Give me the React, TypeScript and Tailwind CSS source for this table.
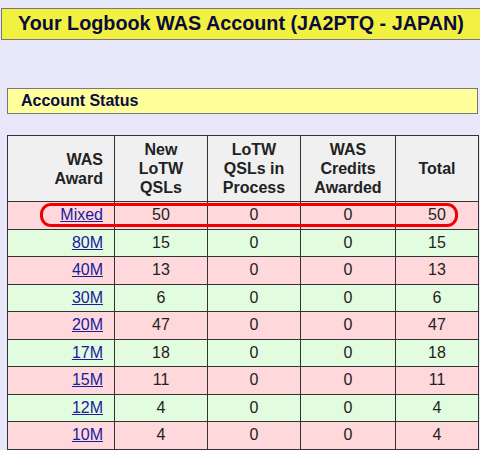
import React from "react";

const rows: [string, number, number, number, number][] = [
  ["Mixed", 50, 0, 0, 50],
  ["80M", 15, 0, 0, 15],
  ["40M", 13, 0, 0, 13],
  ["30M", 6, 0, 0, 6],
  ["20M", 47, 0, 0, 47],
  ["17M", 18, 0, 0, 18],
  ["15M", 11, 0, 0, 11],
  ["12M", 4, 0, 0, 4],
  ["10M", 4, 0, 0, 4],
];

export default function App() {
  return (
    <div
      className="w-[480px] h-[450px] overflow-hidden bg-[#e8e8fa] relative"
      style={{ fontFamily: '"Liberation Sans", Arial, sans-serif' }}
    >
      <div className="pt-[8px] pl-[1px]">
        <div className="h-[32px] bg-[#f2f040] border border-[#777] flex items-center pl-[16px] text-[19.8px] font-bold text-[#0b0b40] w-[480px]">
          Your Logbook WAS Account (JA2PTQ - JAPAN)
        </div>
      </div>
      <div className="mt-[48px] ml-[7px] w-[471px] h-[26px] bg-[#ffff9c] border border-[#777] flex items-center pl-[13px] text-[16px] font-bold text-[#0b0b40]">
        Account Status
      </div>
      <div className="mt-[21px] ml-[7px] relative">
        <table className="border-collapse text-[16px] text-[#222]">
          <colgroup>
            <col className="w-[107px]" />
            <col className="w-[93px]" />
            <col className="w-[93px]" />
            <col className="w-[95px]" />
            <col className="w-[83px]" />
          </colgroup>
          <thead>
            <tr className="h-[66px] bg-[#f0f0f0] font-bold leading-[19px]">
              <th className="border border-[#333] text-right pr-[11px] font-bold">
                WAS
                <br />
                Award
              </th>
              <th className="border border-[#333] text-center font-bold">
                New
                <br />
                LoTW
                <br />
                QSLs
              </th>
              <th className="border border-[#333] text-center font-bold">
                LoTW
                <br />
                QSLs in
                <br />
                Process
              </th>
              <th className="border border-[#333] text-center font-bold">
                WAS
                <br />
                Credits
                <br />
                Awarded
              </th>
              <th className="border border-[#333] text-center font-bold">Total</th>
            </tr>
          </thead>
          <tbody>
            {rows.map((r, i) => (
              <tr
                key={r[0]}
                className={
                  (i % 2 === 0 ? "bg-[#ffd8dc]" : "bg-[#e2fce0]") + " h-[27.5px]"
                }
              >
                <td className="border border-[#333] text-right pr-[11px]">
                  <a href="#" className="text-[#1a1a9c] underline">
                    {r[0]}
                  </a>
                </td>
                <td className="border border-[#333] text-center">{r[1]}</td>
                <td className="border border-[#333] text-center">{r[2]}</td>
                <td className="border border-[#333] text-center">{r[3]}</td>
                <td className="border border-[#333] text-center">{r[4]}</td>
              </tr>
            ))}
          </tbody>
        </table>
        <div className="absolute left-[33px] top-[68px] w-[418px] h-[24px] border-[3px] border-[#e00] rounded-[11px] pointer-events-none" />
      </div>
    </div>
  );
}
